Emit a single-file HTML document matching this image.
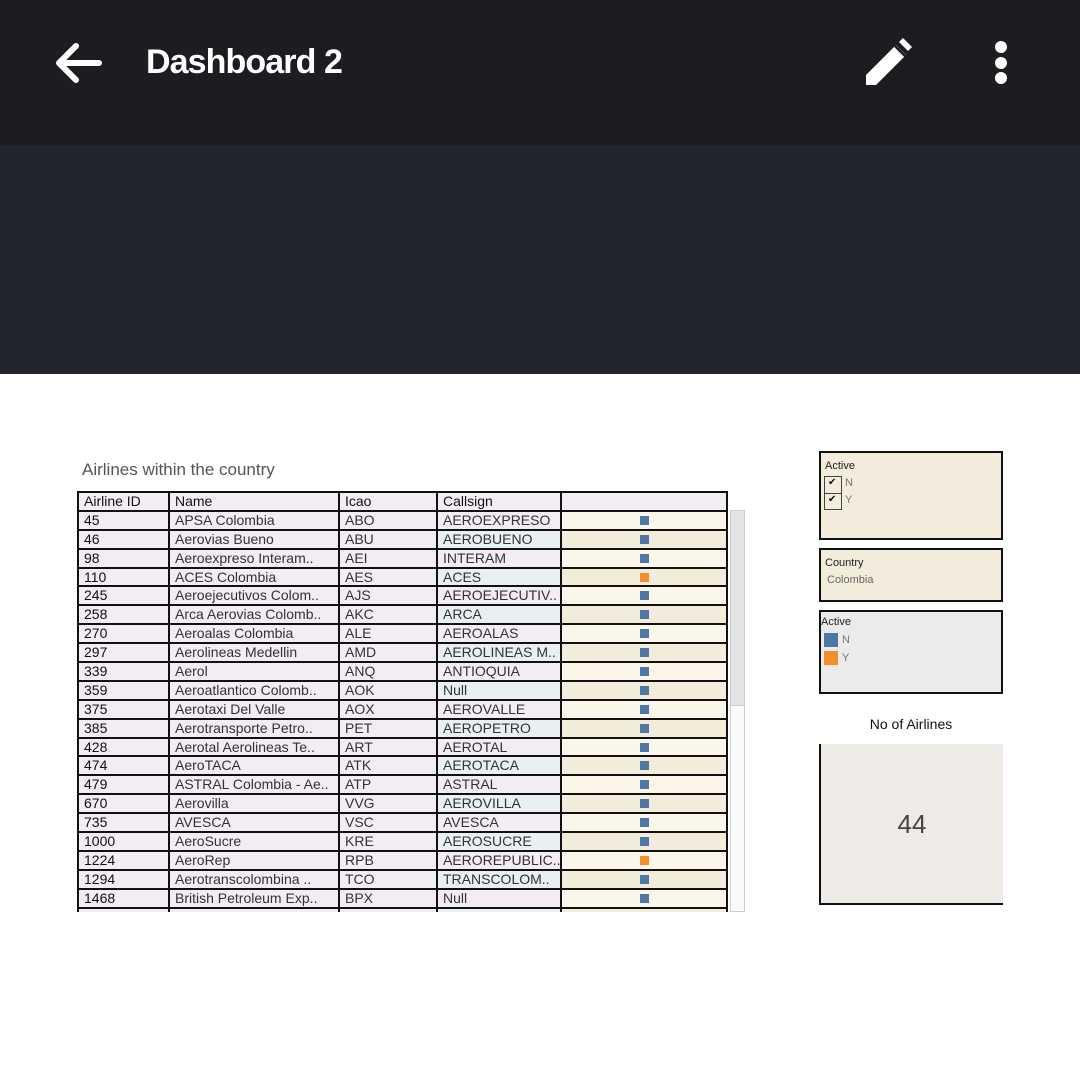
<!DOCTYPE html>
<html><head><meta charset="utf-8"><style>
*{margin:0;padding:0;box-sizing:border-box}
body{width:1080px;height:1075px;background:#fff;position:relative;overflow:hidden;font-family:"Liberation Sans","DejaVu Sans",sans-serif}
.top{position:absolute;left:0;top:0;width:1080px;height:145px;background:#1c1d21}
.band{position:absolute;left:0;top:145px;width:1080px;height:229px;background:#22252e}
.title{position:absolute;left:146px;top:43px;color:#fff;font-weight:bold;font-size:34px;letter-spacing:-0.9px}
.cap{position:absolute;left:82px;top:460px;font-size:17px;color:#555}
.tbl{position:absolute;left:77px;top:491px;width:651px;height:421px;overflow:hidden;border:2px solid #111;border-bottom:none}
.r{display:flex;height:18.9px;border-bottom:2px solid #111;font-size:14px;color:#333;line-height:16.5px}
.r div{border-right:2px solid #111;padding-left:5px;white-space:nowrap;overflow:hidden}
.r div:last-child{border-right:none}
.c1{width:91px;background:#f2ecf3;color:#111}.c2{width:170px;background:#f2ecf3}.c3{width:98px;background:#f2ecf3}.c4{width:124px}.c5{width:164px;position:relative}
.r:nth-child(even) .c4{background:#f3ecf3}.r:nth-child(odd) .c4{background:#e9f0f1}
.r:nth-child(even) .c5{background:#faf6ea}.r:nth-child(odd) .c5{background:#f3ecdb}
.h div{background:#f2ecf3!important;color:#111}
.m{position:absolute;left:78px;top:4px;width:9px;height:9px;background:#4e79a7}
.o{background:#f28e2b}
.sb{position:absolute;left:730px;top:510px;width:15px;height:402px;border:1px solid #ccc;background:#fafafa}
.sb i{position:absolute;left:0;top:0;width:13px;height:195px;background:#e4e4e4;border-bottom:1px solid #ccc}
.box{position:absolute;left:819px;width:184px;border:2px solid #111;font-size:11px;color:#333}
</style></head><body>
<div class="top"></div><div class="band"></div>
<svg style="position:absolute;left:52px;top:40px" width="52" height="46" viewBox="0 0 52 46"><path d="M47 23H8M24 6L7 23L24 40" stroke="#fff" stroke-width="6" fill="none" stroke-linecap="round" stroke-linejoin="round"/></svg>
<div class="title">Dashboard 2</div>
<svg style="position:absolute;left:862px;top:38px" width="52" height="50" viewBox="0 0 52 50"><path d="M4 37L34 7L44 17L14 47H4Z" fill="#fff"/><path d="M37 4L41 0L50 9L46 13Z" fill="#fff"/><path d="M33 8L45 20" stroke="#1c1d21" stroke-width="2.5"/></svg>
<svg style="position:absolute;left:990px;top:40px" width="22" height="46"><circle cx="11" cy="7" r="6" fill="#fff"/><circle cx="11" cy="23" r="6" fill="#fff"/><circle cx="11" cy="38" r="6" fill="#fff"/></svg>
<div class="cap">Airlines within the country</div>
<div class="tbl">
<div class="r h"><div class="c1">Airline ID</div><div class="c2">Name</div><div class="c3">Icao</div><div class="c4">Callsign</div><div class="c5"></div></div>
<div class="r"><div class="c1">45</div><div class="c2">APSA Colombia</div><div class="c3">ABO</div><div class="c4">AEROEXPRESO</div><div class="c5"><i class="m"></i></div></div>
<div class="r"><div class="c1">46</div><div class="c2">Aerovias Bueno</div><div class="c3">ABU</div><div class="c4">AEROBUENO</div><div class="c5"><i class="m"></i></div></div>
<div class="r"><div class="c1">98</div><div class="c2">Aeroexpreso Interam..</div><div class="c3">AEI</div><div class="c4">INTERAM</div><div class="c5"><i class="m"></i></div></div>
<div class="r"><div class="c1">110</div><div class="c2">ACES Colombia</div><div class="c3">AES</div><div class="c4">ACES</div><div class="c5"><i class="m o"></i></div></div>
<div class="r"><div class="c1">245</div><div class="c2">Aeroejecutivos Colom..</div><div class="c3">AJS</div><div class="c4">AEROEJECUTIV..</div><div class="c5"><i class="m"></i></div></div>
<div class="r"><div class="c1">258</div><div class="c2">Arca Aerovias Colomb..</div><div class="c3">AKC</div><div class="c4">ARCA</div><div class="c5"><i class="m"></i></div></div>
<div class="r"><div class="c1">270</div><div class="c2">Aeroalas Colombia</div><div class="c3">ALE</div><div class="c4">AEROALAS</div><div class="c5"><i class="m"></i></div></div>
<div class="r"><div class="c1">297</div><div class="c2">Aerolineas Medellin</div><div class="c3">AMD</div><div class="c4">AEROLINEAS M..</div><div class="c5"><i class="m"></i></div></div>
<div class="r"><div class="c1">339</div><div class="c2">Aerol</div><div class="c3">ANQ</div><div class="c4">ANTIOQUIA</div><div class="c5"><i class="m"></i></div></div>
<div class="r"><div class="c1">359</div><div class="c2">Aeroatlantico Colomb..</div><div class="c3">AOK</div><div class="c4">Null</div><div class="c5"><i class="m"></i></div></div>
<div class="r"><div class="c1">375</div><div class="c2">Aerotaxi Del Valle</div><div class="c3">AOX</div><div class="c4">AEROVALLE</div><div class="c5"><i class="m"></i></div></div>
<div class="r"><div class="c1">385</div><div class="c2">Aerotransporte Petro..</div><div class="c3">PET</div><div class="c4">AEROPETRO</div><div class="c5"><i class="m"></i></div></div>
<div class="r"><div class="c1">428</div><div class="c2">Aerotal Aerolineas Te..</div><div class="c3">ART</div><div class="c4">AEROTAL</div><div class="c5"><i class="m"></i></div></div>
<div class="r"><div class="c1">474</div><div class="c2">AeroTACA</div><div class="c3">ATK</div><div class="c4">AEROTACA</div><div class="c5"><i class="m"></i></div></div>
<div class="r"><div class="c1">479</div><div class="c2">ASTRAL Colombia - Ae..</div><div class="c3">ATP</div><div class="c4">ASTRAL</div><div class="c5"><i class="m"></i></div></div>
<div class="r"><div class="c1">670</div><div class="c2">Aerovilla</div><div class="c3">VVG</div><div class="c4">AEROVILLA</div><div class="c5"><i class="m"></i></div></div>
<div class="r"><div class="c1">735</div><div class="c2">AVESCA</div><div class="c3">VSC</div><div class="c4">AVESCA</div><div class="c5"><i class="m"></i></div></div>
<div class="r"><div class="c1">1000</div><div class="c2">AeroSucre</div><div class="c3">KRE</div><div class="c4">AEROSUCRE</div><div class="c5"><i class="m"></i></div></div>
<div class="r"><div class="c1">1224</div><div class="c2">AeroRep</div><div class="c3">RPB</div><div class="c4">AEROREPUBLIC..</div><div class="c5"><i class="m o"></i></div></div>
<div class="r"><div class="c1">1294</div><div class="c2">Aerotranscolombina ..</div><div class="c3">TCO</div><div class="c4">TRANSCOLOM..</div><div class="c5"><i class="m"></i></div></div>
<div class="r"><div class="c1">1468</div><div class="c2">British Petroleum Exp..</div><div class="c3">BPX</div><div class="c4">Null</div><div class="c5"><i class="m"></i></div></div>
<div class="r"><div class="c1">1503</div><div class="c2">Colombia Airlines</div><div class="c3">CAL</div><div class="c4">COLAIR</div><div class="c5"><i class="m"></i></div></div>
</div>
<div class="sb"><i></i></div>
<div class="box" style="top:451px;height:89px;background:#f3ebdb">
<div style="position:absolute;left:4px;top:7px;color:#222">Active</div>
<div style="position:absolute;left:3px;top:23px;width:18px;height:34px;border:1px solid #444"></div>
<div style="position:absolute;left:3px;top:40px;width:18px;height:1px;background:#444"></div>
<div style="position:absolute;left:7px;top:24px;font-size:10px;color:#111">✔</div><div style="position:absolute;left:7px;top:41px;font-size:10px;color:#111">✔</div>
<div style="position:absolute;left:24px;top:24px;color:#777">N</div><div style="position:absolute;left:24px;top:41px;color:#777">Y</div>
</div>
<div class="box" style="top:548px;height:54px;background:#f3ebdb">
<div style="position:absolute;left:4px;top:7px;color:#222">Country</div>
<div style="position:absolute;left:6px;top:24px;color:#666">Colombia</div>
</div>
<div class="box" style="top:610px;height:84px;background:#ebebeb">
<div style="position:absolute;left:0;top:4px;color:#222">Active</div>
<div style="position:absolute;left:3px;top:21px;width:14px;height:14px;background:#4e79a7"></div>
<div style="position:absolute;left:3px;top:39px;width:14px;height:14px;background:#f28e2b"></div>
<div style="position:absolute;left:21px;top:22px;color:#777">N</div><div style="position:absolute;left:21px;top:40px;color:#777">Y</div>
</div>
<div style="position:absolute;left:819px;top:716px;width:184px;text-align:center;font-size:14px;color:#111">No of Airlines</div>
<div style="position:absolute;left:819px;top:744px;width:184px;height:161px;background:#eeebe7;border-left:2px solid #111;border-bottom:2px solid #111;text-align:center;line-height:160px;font-size:26px;color:#444">44</div>
</body></html>
